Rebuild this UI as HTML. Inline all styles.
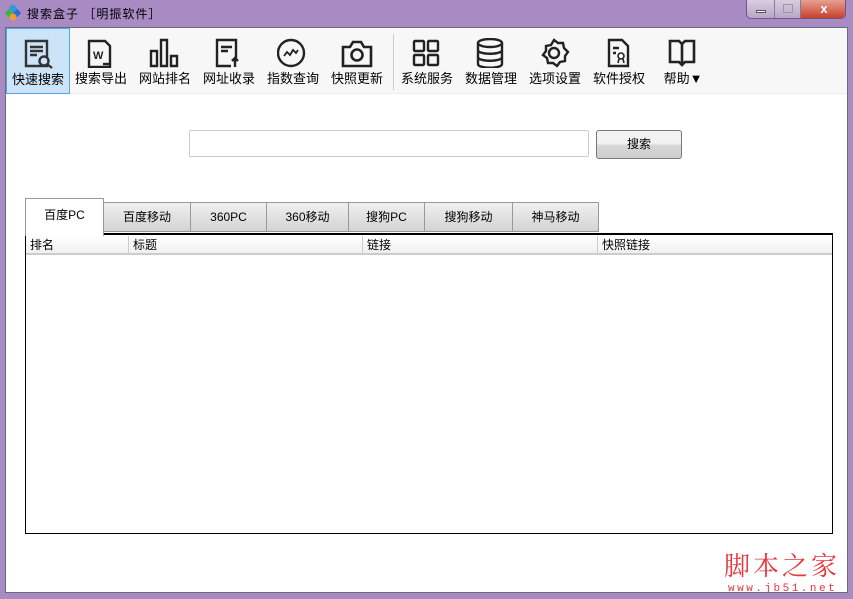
<!DOCTYPE html>
<html><head><meta charset="utf-8"><style>
*{margin:0;padding:0;box-sizing:border-box}
html,body{width:853px;height:599px;overflow:hidden}
body{background:#a98bc4;position:relative;font-family:"Liberation Sans","Noto Sans CJK SC",sans-serif;font-size:12px;color:#000}
.abs{position:absolute}
#title{left:27px;top:5px;font-size:12px;color:#000;letter-spacing:1px;white-space:nowrap}
#client{left:5px;top:27px;width:843px;height:566px;background:#fff;border:1px solid #6a6a7a;overflow:hidden}
#tb{left:0;top:0;width:841px;height:66px;background:#f7f7f7;border-bottom:1px solid #eee}
.ti{position:absolute;top:0;width:64px;height:66px;text-align:center}
.ti svg{position:absolute;left:16px;top:10px}
.ti span{position:absolute;left:0;width:100%;top:40px;font-size:13px;white-space:nowrap}
.tab{position:absolute;top:174px;height:30px;background:linear-gradient(#f0f0f0,#d4d4d4);border:1px solid #999;text-align:center;line-height:28px;font-size:12px;white-space:nowrap}
.hd{position:absolute;top:0;height:18px;line-height:18px;font-size:12px;padding-left:4px;border-right:1px solid #ccc}
</style></head><body>
<svg class="abs" style="left:5px;top:5px" width="16" height="16"><rect x="5" y="0" width="6" height="6" fill="#2a9bd8" transform="rotate(45 8 3)"/><rect x="1" y="5" width="6" height="6" fill="#3cb34a" transform="rotate(45 4 8)"/><rect x="9" y="5" width="6" height="6" fill="#2a6fd8" transform="rotate(45 12 8)"/><circle cx="8" cy="12" r="3.5" fill="#f29a2e"/></svg>
<div id="title" class="abs">搜索盒子 ［明振软件］</div>
<div class="abs" style="left:746px;top:0;width:100px;height:19px;border:1px solid #6d5a80;border-top:none;border-radius:0 0 5px 5px;background:linear-gradient(#d8cde2,#b8a6c8);overflow:hidden">
<div class="abs" style="left:0;top:0;width:28px;height:18px;border-right:1px solid #8a7a9a"><div class="abs" style="left:9px;top:10px;width:10px;height:3px;background:#fff;border:1px solid #555"></div></div>
<div class="abs" style="left:28px;top:0;width:26px;height:18px;border-right:1px solid #8a7a9a"><div class="abs" style="left:8px;top:4px;width:10px;height:9px;border:1px solid #999"></div></div>
<div class="abs" style="left:54px;top:0;width:46px;height:18px;background:linear-gradient(#e8a090,#c9402c);color:#fff;font-weight:bold;text-align:center;line-height:18px;font-size:13px">x</div>
</div>
<div id="client" class="abs">
<div id="tb" class="abs">
<div class="ti" style="left:0;background:#cce4f7;border:1px solid #5ba4e6;width:64px"><svg width="32" height="30" fill="none" stroke="#333" stroke-width="2.4"><path d="M3 2h21v25H3z M7 8h13 M7 12h13 M7 16h7"/><circle cx="21" cy="22" r="4.5" fill="#cce4f7"/><path d="M24 25l5 4"/></svg><span>快速搜索</span></div>
<div class="ti" style="left:63px"><svg width="32" height="30" fill="none" stroke="#222" stroke-width="2.4"><path d="M4 3h16l5 5v21H4z"/><text x="8" y="21" font-size="11" font-weight="bold" fill="#222" stroke="none" font-family="Liberation Sans">W</text><path d="M18 26h8"/></svg><span>搜索导出</span></div>
<div class="ti" style="left:127px"><svg width="32" height="30" fill="none" stroke="#222" stroke-width="2.4"><path d="M2 13h6v15H2z M12 2h6v26h-6z M22 18h6v10h-6z"/></svg><span>网站排名</span></div>
<div class="ti" style="left:191px"><svg width="32" height="30" fill="none" stroke="#222" stroke-width="2.4"><path d="M18 28H4V2h19v18 M8 9h11 M8 13h7"/><path d="M22 29v-9 M19 23l3-3 3 3" fill="#222"/></svg><span>网址收录</span></div>
<div class="ti" style="left:255px"><svg width="32" height="30" fill="none" stroke="#222" stroke-width="2.4"><circle cx="14" cy="15" r="13"/><path d="M7 18l3-4 3 3 3-5 3 3 2-3" stroke-width="1.8"/></svg><span>指数查询</span></div>
<div class="ti" style="left:319px"><svg width="32" height="30" fill="none" stroke="#222" stroke-width="2.6"><path d="M2 9h7l3-5h8l3 5h7v19H2z"/><circle cx="16" cy="17" r="5.5"/></svg><span>快照更新</span></div>
<div class="abs" style="left:387px;top:6px;width:1px;height:56px;background:#ccc"></div>
<div class="ti" style="left:389px"><svg width="32" height="30" fill="none" stroke="#222" stroke-width="2.4"><rect x="3" y="3" width="10" height="10" rx="1"/><rect x="17" y="3" width="10" height="10" rx="1"/><rect x="3" y="17" width="10" height="10" rx="1"/><rect x="17" y="17" width="10" height="10" rx="1"/></svg><span>系统服务</span></div>
<div class="ti" style="left:453px"><svg width="32" height="30" fill="none" stroke="#222" stroke-width="2.4"><ellipse cx="15" cy="5" rx="12" ry="4"/><path d="M3 5v21c0 5 24 5 24 0V5 M3 12c0 5 24 5 24 0 M3 19c0 5 24 5 24 0"/></svg><span>数据管理</span></div>
<div class="ti" style="left:517px"><svg width="32" height="30" fill="none" stroke="#222" stroke-width="2.4"><path d="M15 2l4 3 5 0 1 5 4 4-3 4 0 5-5 1-3 4-4-3-5 0-1-5-4-3 3-4 0-5 5-1z"/><circle cx="15" cy="15" r="5"/></svg><span>选项设置</span></div>
<div class="ti" style="left:581px"><svg width="32" height="30" fill="none" stroke="#222" stroke-width="2.4"><path d="M6 2h13l6 6v20H6z M10 10h6 M10 15h3"/><circle cx="18" cy="18" r="3" stroke-width="1.6"/><path d="M16 21l-1 4 M20 21l1 4" stroke-width="1.6"/></svg><span>软件授权</span></div>
<div class="ti" style="left:645px"><svg width="32" height="30" fill="none" stroke="#222" stroke-width="2.6"><path d="M3 3h9l3 3 3-3h9v21h-9l-3 3-3-3H3z M15 6v19"/></svg><span>帮助▼</span></div>
</div>
<div class="abs" style="left:183px;top:102px;width:400px;height:27px;border:1px solid #ccc;border-radius:2px"></div>
<div class="abs" style="left:590px;top:102px;width:86px;height:29px;border:1px solid #777;border-radius:3px;background:linear-gradient(#f2f2f2 45%,#d6d6d6 55%,#cfcfcf);text-align:center;line-height:27px;font-size:12px">搜索</div>
<div class="tab" style="left:97px;width:88px">百度移动</div>
<div class="tab" style="left:184px;width:77px">360PC</div>
<div class="tab" style="left:260px;width:83px">360移动</div>
<div class="tab" style="left:342px;width:77px">搜狗PC</div>
<div class="tab" style="left:418px;width:89px">搜狗移动</div>
<div class="tab" style="left:506px;width:87px">神马移动</div>
<div class="abs" style="left:19px;top:205px;width:808px;height:301px;border:1px solid #000;border-top:2px solid #000;background:#fff">
<div class="abs" style="left:0;top:1px;width:806px;height:19px;background:linear-gradient(#fff,#f0f0f0);border-bottom:2px solid #ccc">
<div class="hd" style="left:0;width:103px">排名</div>
<div class="hd" style="left:103px;width:234px">标题</div>
<div class="hd" style="left:337px;width:235px">链接</div>
<div class="hd" style="left:572px;width:230px;border:none">快照链接</div>
</div></div>
<div class="abs" style="left:19px;top:170px;width:79px;height:38px;background:#fff;border:1px solid #999;border-bottom:none;text-align:center;line-height:32px;font-size:12px">百度PC</div>
<div class="abs" style="left:718px;top:522px;font-size:26px;line-height:30px;color:#e8343a;letter-spacing:3px;white-space:nowrap;font-family:'Noto Serif CJK SC',serif">脚本之家</div>
<div class="abs" style="left:722px;top:555px;font-size:11px;line-height:12px;color:#e8343a;letter-spacing:2.5px;white-space:nowrap;font-family:'Liberation Mono',monospace">www.jb51.net</div>
</div>
</body></html>
